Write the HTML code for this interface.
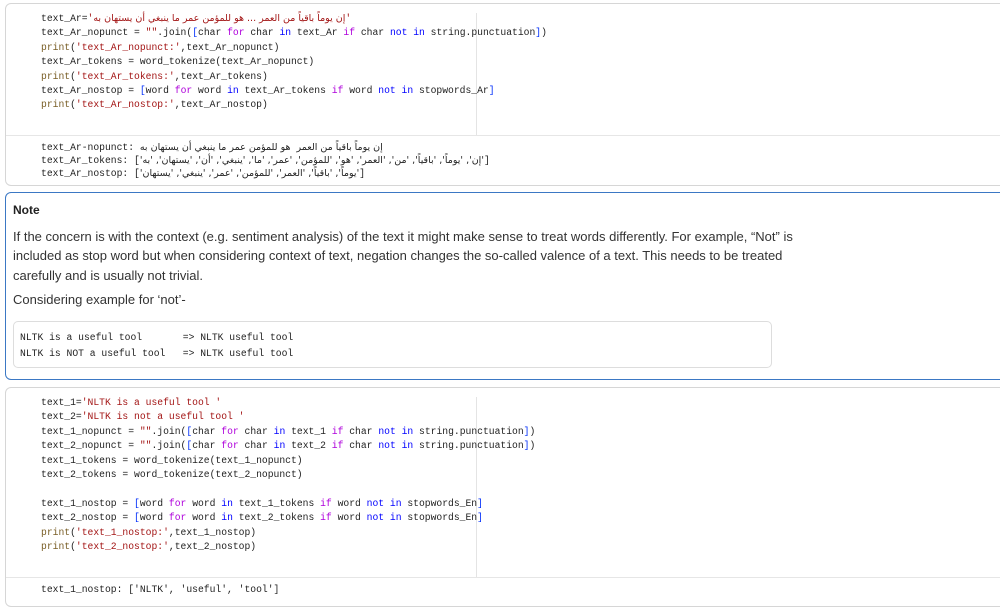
<!DOCTYPE html>
<html><head><meta charset="utf-8"><style>
body{margin:0;width:1000px;height:594px;overflow:hidden;background:#fff;font-family:"Liberation Sans","Noto Sans CJK SC",sans-serif;color:#222}
.cell{position:absolute;left:5px;width:1010px;border:1px solid #d6d6d6;border-radius:6px;box-sizing:border-box}
pre{margin:0;font-family:"Liberation Mono","DejaVu Sans Mono",monospace;font-size:9.7px;line-height:14.4px;color:#222;white-space:pre}
.s{color:#a31515}.k{color:#af00db}.b{color:#0000ff}.f{color:#795e26}.p{color:#0431fa}
.vl{position:absolute;left:470px;width:1px;background:#e4e4e4}
.sep{position:absolute;left:0;right:0;height:1px;background:#e6e6e6}
.ar{font-family:"DejaVu Sans",sans-serif;font-size:9.5px}
</style></head><body>
<div class="cell" style="top:3px;height:183px">
<div class="vl" style="top:9px;height:122px"></div>
<pre style="position:absolute;left:35px;top:8px">text_Ar=<span class="s">'<span class="ar">إن يوماً باقياً من العمر ... هو للمؤمن عمر ما ينبغي أن يستهان به</span>'</span>
text_Ar_nopunct = <span class="s">""</span>.join(<span class="p">[</span>char <span class="k">for</span> char <span class="b">in</span> text_Ar <span class="k">if</span> char <span class="b">not in</span> string.punctuation<span class="p">]</span>)
<span class="f">print</span>(<span class="s">'text_Ar_nopunct:'</span>,text_Ar_nopunct)
text_Ar_tokens = word_tokenize(text_Ar_nopunct)
<span class="f">print</span>(<span class="s">'text_Ar_tokens:'</span>,text_Ar_tokens)
text_Ar_nostop = <span class="p">[</span>word <span class="k">for</span> word <span class="b">in</span> text_Ar_tokens <span class="k">if</span> word <span class="b">not in</span> stopwords_Ar<span class="p">]</span>
<span class="f">print</span>(<span class="s">'text_Ar_nostop:'</span>,text_Ar_nostop)</pre>
<div class="sep" style="top:131px"></div>
<pre style="position:absolute;left:35px;top:137px;line-height:13px">text_Ar-nopunct: <span class="ar">إن يوماً باقياً من العمر  هو للمؤمن عمر ما ينبغي أن يستهان به</span>
text_Ar_tokens: [<span class="ar">'إن', 'يوماً', 'باقياً', 'من', 'العمر', 'هو', 'للمؤمن', 'عمر', 'ما', 'ينبغي', 'أن', 'يستهان', 'به'</span>]
text_Ar_nostop: [<span class="ar">'يوماً', 'باقياً', 'العمر', 'للمؤمن', 'عمر', 'ينبغي', 'يستهان'</span>]</pre>
</div>
<div class="cell" style="top:192px;height:188px;border:1px solid #3b78c4">
<div style="position:absolute;left:7px;top:10px;font-weight:bold;font-size:12px">Note</div>
<div style="position:absolute;left:7px;top:34px;width:800px;font-size:13px;line-height:19.3px;color:#333">If the concern is with the context (e.g. sentiment analysis) of the text it might make sense to treat words differently. For example, “Not” is<br>included as stop word but when considering context of text, negation changes the so-called valence of a text. This needs to be treated<br>carefully and is usually not trivial.</div>
<div style="position:absolute;left:7px;top:99px;font-size:13px;color:#333">Considering example for ‘not’-</div>
<div style="position:absolute;left:7px;top:128px;width:759px;height:47px;border:1px solid #ddd;border-radius:5px;box-sizing:border-box">
<pre style="position:absolute;left:6px;top:8px;font-size:9.7px;line-height:16px">NLTK is a useful tool       => NLTK useful tool
NLTK is NOT a useful tool   => NLTK useful tool</pre></div>
</div>
<div class="cell" style="top:387px;height:220px">
<div class="vl" style="top:9px;height:180px"></div>
<pre style="position:absolute;left:35px;top:8px">text_1=<span class="s">'NLTK is a useful tool '</span>
text_2=<span class="s">'NLTK is not a useful tool '</span>
text_1_nopunct = <span class="s">""</span>.join(<span class="p">[</span>char <span class="k">for</span> char <span class="b">in</span> text_1 <span class="k">if</span> char <span class="b">not in</span> string.punctuation<span class="p">]</span>)
text_2_nopunct = <span class="s">""</span>.join(<span class="p">[</span>char <span class="k">for</span> char <span class="b">in</span> text_2 <span class="k">if</span> char <span class="b">not in</span> string.punctuation<span class="p">]</span>)
text_1_tokens = word_tokenize(text_1_nopunct)
text_2_tokens = word_tokenize(text_2_nopunct)

text_1_nostop = <span class="p">[</span>word <span class="k">for</span> word <span class="b">in</span> text_1_tokens <span class="k">if</span> word <span class="b">not in</span> stopwords_En<span class="p">]</span>
text_2_nostop = <span class="p">[</span>word <span class="k">for</span> word <span class="b">in</span> text_2_tokens <span class="k">if</span> word <span class="b">not in</span> stopwords_En<span class="p">]</span>
<span class="f">print</span>(<span class="s">'text_1_nostop:'</span>,text_1_nostop)
<span class="f">print</span>(<span class="s">'text_2_nostop:'</span>,text_2_nostop)</pre>
<div class="sep" style="top:189px"></div>
<pre style="position:absolute;left:35px;top:195px">text_1_nostop: ['NLTK', 'useful', 'tool']</pre>
</div>
</body></html>
